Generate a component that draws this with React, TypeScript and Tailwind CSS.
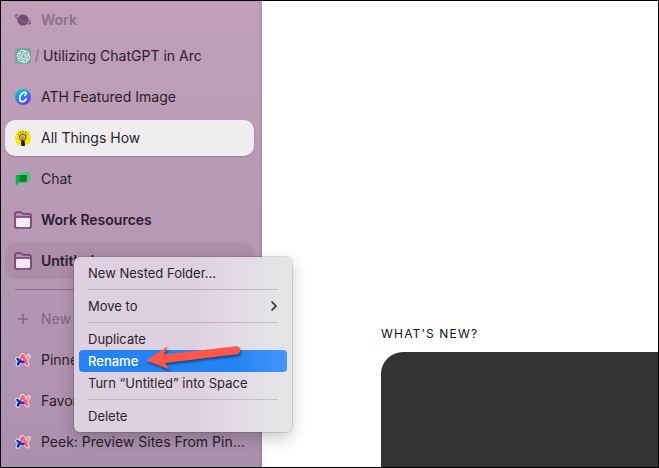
import type { ReactNode } from "react";
import { ChevronRight, Plus } from "lucide-react";
import { SiOpenai } from "react-icons/si";

function PlanetIcon() {
  return (
    <svg viewBox="0 0 16 12" className="w-4 h-3" fill="none">
      <circle cx="8" cy="6" r="5.600" fill="#744a70" />
      <path
        d="M1.400 3.200c1.200 1.500 3.800 3.400 6.800 4.700s5.500 1.800 6.600 1.400"
        stroke="#c09fbb"
        strokeWidth="1"
      />
      <path
        d="M2.600 1.300C1.300.6.400.9.600 2c.4 1.900 3.900 4.600 7.400 6.200s6.800 2.100 7.300 1.100c.3-.6-.2-1.500-1.100-2.300"
        stroke="#744a70"
        strokeWidth="1.100"
        strokeLinecap="round"
      />
    </svg>
  );
}

function ChatGptIcon() {
  return (
    <span className="w-4 h-4 rounded bg-[#74aa9c] flex items-center justify-center">
      <SiOpenai className="w-[13px] h-[13px] text-white" />
    </span>
  );
}

function CanvaIcon() {
  return (
    <svg viewBox="0 0 16 16" className="w-4 h-4">
      <defs>
        <linearGradient id="canva" x1="0.2" y1="0" x2="0.75" y2="1">
          <stop offset="0" stopColor="#00d0cf" />
          <stop offset="0.5" stopColor="#2b86e6" />
          <stop offset="1" stopColor="#7a2bee" />
        </linearGradient>
      </defs>
      <circle cx="8" cy="8" r="8" fill="url(#canva)" />
      <path
        d="M9.800 6.300c1.600-.7 1.900-3.100.1-3.100C7 3.200 4.700 6.400 4.700 9.300c0 2.100 1 3.400 2.600 3.400 1.700 0 3-1.200 3.800-2.700"
        fill="none"
        stroke="white"
        strokeWidth="1.600"
        strokeLinecap="round"
      />
    </svg>
  );
}

function BulbIcon() {
  return (
    <svg viewBox="0 0 16 16" className="w-4 h-4">
      <circle cx="8" cy="8" r="8" fill="#fbe500" />
      <path d="M6.200 10h3.300l.5 5.700a8 8 0 0 1-3.700 0z" fill="#1c1a10" />
      <circle cx="7.800" cy="7.300" r="3.300" fill="#d0b689" stroke="#4a4128" strokeWidth="0.9" />
      <path d="M6.800 6.600l1 1 1-1M7.800 7.600v2.600" fill="none" stroke="#4a4128" strokeWidth="0.6" />
      <path
        d="M3.300 4.200l.8.500M5 2l.5 1M7.900 1.200v1.100M10.800 2l-.5 1M12.500 4.200l-.8.500"
        stroke="#2b2618"
        strokeWidth="0.9"
      />
    </svg>
  );
}

function ChatIcon() {
  return (
    <svg viewBox="0 0 16 16" className="w-4 h-4">
      <path d="M4.600 1h9.600c.6 0 1 .4 1 1v8.500H4.600z" fill="#5bc27d" />
      <path d="M1.600 4h10.200v6.500c0 .6-.4 1-1 1H4.200L.8 14.800V4.800c0-.4.4-.8.8-.8z" fill="#00b848" />
      <path d="M4.600 4h7.200v5.500c0 .6-.4 1-1 1H4.600z" fill="#00832d" />
    </svg>
  );
}

function FolderIcon() {
  return (
    <svg viewBox="0 0 18 18" className="w-[18px] h-[18px]">
      <path
        d="M1 15V3.200C1 2 1.800 1.200 3 1.200h3.200c.6 0 1 .2 1.400.6l.6.600c.4.400.8.500 1.400.500H15c1.200 0 2 .8 2 2V15c0 1.200-.8 2-2 2H3c-1.200 0-2-.8-2-2z"
        fill="#b58fb1"
        stroke="#74496f"
        strokeWidth="1.700"
      />
      <path d="M1 5.900h16" stroke="#74496f" strokeWidth="1.400" />
      <rect x="2" y="7" width="14" height="9" rx="1.500" fill="#f6e9f5" />
    </svg>
  );
}

function ArcIcon() {
  return (
    <svg viewBox="0 0 16 16" className="w-4 h-4" fill="none" strokeLinecap="round" strokeLinejoin="round">
      <path
        d="M2.800 12.500L7.500 3.200l4.700 9M2.400 6.800c3 4.200 8.600 3.200 11.200-2.500"
        stroke="#f3dfee"
        strokeWidth="4.400"
      />
      <path d="M13.600 4.300c-.6 2.400-1.700 4.200-3.300 5.200" stroke="#ff8d9d" strokeWidth="2.600" />
      <path d="M5 8.500L2.900 12.300" stroke="#1025a0" strokeWidth="2.600" />
      <path d="M2.500 6.900c1.500 2.400 4.300 3.400 7 2.800" stroke="#1b36c8" strokeWidth="2.600" />
      <path d="M6.300 6L7.700 3.400l4.400 8.700" stroke="#fb5f6c" strokeWidth="2.800" />
    </svg>
  );
}

interface SidebarItemProps {
  icon: ReactNode;
  label: string;
  className?: string;
}

function SidebarItem({ icon, label, className = "" }: SidebarItemProps) {
  return (
    <button
      type="button"
      className={`w-full h-9 shrink-0 pl-[9px] flex items-center gap-[9px] rounded-[10px] text-left whitespace-nowrap ${className}`}
    >
      <span className="w-[18px] shrink-0 flex justify-center">{icon}</span>
      {label}
    </button>
  );
}

function MenuItem({ label, submenu = false, active = false }: { label: string; submenu?: boolean; active?: boolean }) {
  return (
    <button
      type="button"
      role="menuitem"
      className={`w-full h-[22px] px-[9px] flex items-center justify-between rounded text-left ${
        active ? "bg-linear-to-r from-[#2383f3] from-75% to-[#4495fb] text-white font-medium" : ""
      }`}
    >
      {label}
      {submenu && <ChevronRight className="w-4 h-4 -mr-1" strokeWidth={2.5} />}
    </button>
  );
}

function MenuDivider() {
  return <hr className="mx-[9px] my-[5px] border-black/15" />;
}

function RenameArrow() {
  return (
    <svg
      viewBox="0 0 100 32"
      className="absolute left-[71px] top-[85px] w-[100px] h-8 pointer-events-none drop-shadow-[1px_2px_1px_rgba(0,0,0,0.45)]"
    >
      <path
        d="M1 18.500L22.500 4.500l-3.500 8L91 4.200c5-.5 6 7.300 1 8L20 21l4.500 6.500z"
        fill="#fc574a"
      />
    </svg>
  );
}

function ContextMenu() {
  return (
    <div
      role="menu"
      className="absolute left-[69px] top-[14px] z-10 w-[218px] p-[5px] rounded-md bg-linear-to-r from-[#dfd0e1] from-55% to-[#e4e5e7] to-95% text-[13px] leading-4 text-[#2a222b] font-normal shadow-[0_0_0_1px_rgba(0,0,0,0.12),0_6px_16px_rgba(0,0,0,0.22)]"
    >
      <MenuItem label="New Nested Folder..." />
      <MenuDivider />
      <MenuItem label="Move to" submenu />
      <MenuDivider />
      <MenuItem label="Duplicate" />
      <MenuItem label="Rename" active />
      <MenuItem label="Turn “Untitled” into Space" />
      <MenuDivider />
      <MenuItem label="Delete" />
      <RenameArrow />
    </div>
  );
}

function Sidebar() {
  return (
    <aside className="w-[261px] shrink-0 pt-px pl-1 pr-2 bg-linear-to-b from-[#c19fba] via-[#b799b5] to-[#ab90ae] text-sm text-[#2a1c2b] shadow-[inset_-3px_0_3px_-2px_rgba(0,0,0,0.15)]">
      <h2 className="h-9 pl-[9px] flex items-center gap-[9px] font-semibold text-[#8d7089]">
        <span className="w-[18px] flex justify-center">
          <PlanetIcon />
        </span>
        Work
      </h2>
      <nav className="flex flex-col gap-[5px]">
        <button type="button" className="w-full h-9 pl-[9px] flex items-center text-left">
          <span className="w-[18px] flex justify-center">
            <ChatGptIcon />
          </span>
          <svg viewBox="0 0 4 14" className="w-1 h-3.5 ml-[3px] mr-1">
            <path d="M3.500.5l-3 13" stroke="#8d7089" strokeWidth="1.300" />
          </svg>
          Utilizing ChatGPT in Arc
        </button>
        <SidebarItem icon={<CanvaIcon />} label="ATH Featured Image" />
        <SidebarItem
          icon={<BulbIcon />}
          label="All Things How"
          className="bg-[#efedef] shadow-[0_1px_2px_rgba(0,0,0,0.2)]"
        />
        <SidebarItem icon={<ChatIcon />} label="Chat" />
        <SidebarItem icon={<FolderIcon />} label="Work Resources" className="font-semibold" />
        <div className="relative">
          <SidebarItem icon={<FolderIcon />} label="Untitled" className="bg-[#603c64]/10 font-semibold" />
          <ContextMenu />
        </div>
        <hr className="mx-[10px] mt-[5px] mb-1.5 border-[#8e708e]" />
        <SidebarItem
          icon={<Plus className="w-4 h-4" strokeWidth={2} />}
          label="New Tab"
          className="text-[#7f667f]"
        />
        <SidebarItem icon={<ArcIcon />} label="Pinned Tabs" />
        <SidebarItem icon={<ArcIcon />} label="Favorites" />
        <SidebarItem icon={<ArcIcon />} label="Peek: Preview Sites From Pin…" />
      </nav>
    </aside>
  );
}

export default function App() {
  return (
    <div className="min-h-screen flex border border-black bg-white font-['Inter',sans-serif]">
      <Sidebar />
      <main className="flex-1 min-w-0 pt-[325px] pl-[119px] flex flex-col gap-2.5">
        <h1 className="text-xs tracking-widest text-[#111111]">WHAT’S NEW?</h1>
        <section className="flex-1 rounded-tl-[22px] bg-[#333333]" />
      </main>
    </div>
  );
}
